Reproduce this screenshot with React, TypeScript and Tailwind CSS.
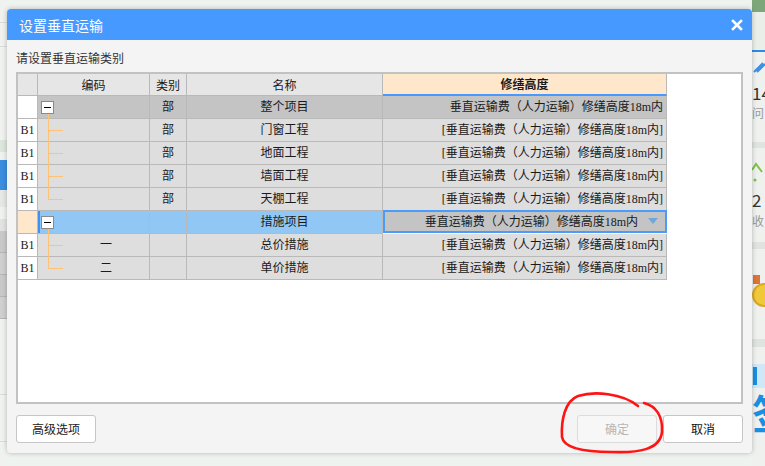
import React from "react";

type Tree = "minus" | "mid" | "last";
type Row = {
  rh: string;
  tree: Tree;
  code: string;
  kind: string;
  name: string;
  value: string;
  variant: "top" | "normal" | "selected";
};

const V = "垂直运输费（人力运输）修缮高度18m内";
const rows: Row[] = [
  { rh: "", tree: "minus", code: "", kind: "部", name: "整个项目", value: V, variant: "top" },
  { rh: "B1", tree: "mid", code: "", kind: "部", name: "门窗工程", value: `[${V}]`, variant: "normal" },
  { rh: "B1", tree: "mid", code: "", kind: "部", name: "地面工程", value: `[${V}]`, variant: "normal" },
  { rh: "B1", tree: "mid", code: "", kind: "部", name: "墙面工程", value: `[${V}]`, variant: "normal" },
  { rh: "B1", tree: "last", code: "", kind: "部", name: "天棚工程", value: `[${V}]`, variant: "normal" },
  { rh: "", tree: "minus", code: "", kind: "", name: "措施项目", value: V, variant: "selected" },
  { rh: "B1", tree: "mid", code: "一", kind: "", name: "总价措施", value: `[${V}]`, variant: "normal" },
  { rh: "B1", tree: "last", code: "二", kind: "", name: "单价措施", value: `[${V}]`, variant: "normal" },
];

function TreeMark({ tree }: { tree: Tree }) {
  if (tree === "minus") {
    return (
      <>
        <div className="absolute left-[3px] top-[5px] w-[13px] h-[13px] border border-[#8a8a8a] bg-white flex items-center justify-center">
          <div className="w-[7px] h-[1px] bg-black" />
        </div>
        <div className="absolute left-[10px] top-[18px] w-[1px] h-[5px] bg-[#ffc274]" />
      </>
    );
  }
  return (
    <>
      <div
        className={
          tree === "mid"
            ? "absolute left-[10px] top-[-1px] w-[1px] h-[24px] bg-[#ffc274]"
            : "absolute left-[10px] top-[-1px] w-[1px] h-[12px] bg-[#ffc274]"
        }
      />
      <div className="absolute left-[10px] top-[11px] w-[15px] h-[1px] bg-[#ffc274]" />
    </>
  );
}

function TableRow({ r }: { r: Row }) {
  const sel = r.variant === "selected";
  const cellBg = r.variant === "top" ? "bg-[#c4c4c4]" : sel ? "bg-[#90c7f5]" : "bg-[#dedede]";
  const cell = "h-[23px] border-r border-b border-[#b9b9b9] flex items-center";
  return (
    <>
      <div className={`${cell} justify-center ${sel ? "bg-[#ffe7cb]" : "bg-white"}`}>{r.rh}</div>
      <div
        className={`${cell} relative pl-[25px] justify-center ${cellBg} ${
          sel ? "shadow-[inset_2px_0_0_#3f92f2]" : ""
        }`}
      >
        <TreeMark tree={r.tree} />
        <span>{r.code}</span>
      </div>
      <div className={`${cell} justify-center ${cellBg}`}>{r.kind}</div>
      <div className={`${cell} justify-center ${cellBg}`}>{r.name}</div>
      {sel ? (
        <div className="h-[23px] border-2 border-[#4a9cf8] bg-[#c4c4c4] flex items-center justify-end pr-[7px] mt-[-1px]">
          <span className="whitespace-nowrap">{r.value}</span>
          <svg width="10" height="7" viewBox="0 0 10 7" className="ml-[10px]">
            <path d="M0 0 L10 0 L5 6 Z" fill="#6fa7da" />
          </svg>
        </div>
      ) : (
        <div className={`${cell} justify-end pr-[3px] ${cellBg}`}>
          <span className="whitespace-nowrap">{r.value}</span>
        </div>
      )}
    </>
  );
}

function Background() {
  return (
    <div className="absolute inset-0 flex justify-between">
      <div className="w-[7px] flex flex-col bg-[#eff2ef]">
        <div className="h-[23px] border-b border-[#dcdcdc]" />
        <div className="h-[24px] border-b border-[#dcdcdc]" />
        <div className="h-[93px]" />
        <div className="h-[12px] bg-[#dce6dc]" />
        <div className="h-[8px]" />
        <div className="h-[30px] bg-[#3b8de0]" />
        <div className="h-[17px] bg-[#e6e8e6]" />
        <div className="h-[12px]" />
        <div className="h-[12px] bg-[#e2e2e2]" />
        <div className="h-[22px] bg-[#c9c9c9] border-b border-[#b5b5b5]" />
        <div className="h-[22px] bg-[#cfcfcf] border-b border-[#b5b5b5]" />
        <div className="h-[22px] bg-[#c9c9c9] border-b border-[#b5b5b5]" />
        <div className="h-[22px] bg-[#cfcfcf] border-b border-[#b5b5b5]" />
        <div className="h-[76px] border-b border-[#dcdcdc]" />
        <div className="h-[47px] border-b border-[#dcdcdc]" />
      </div>
      <div className="w-[13px] flex flex-col bg-[#eef1ee] overflow-hidden font-['Noto_Sans_CJK_SC',sans-serif]">
        <div className="h-[12px] bg-[#7ea67b]" />
        <div className="h-[38px] bg-[#eaefea]" />
        <div className="h-[2px] bg-[#2f8ae6]" />
        <div className="h-[30px] flex items-center">
          <svg width="13" height="14" viewBox="0 0 13 14">
            <path d="M2 12 L11 3 M5 12 L13 4" stroke="#3b8fe6" strokeWidth="2" fill="none" />
          </svg>
        </div>
        <div className="h-[22px] text-[17px] leading-[22px] text-[#333] whitespace-nowrap">14</div>
        <div className="h-[18px] text-[12px] leading-[18px] text-[#999] whitespace-nowrap">问</div>
        <div className="h-[20px]" />
        <div className="h-[6px] bg-[#dfe4df]" />
        <div className="h-[40px] flex items-start pt-[12px]">
          <svg width="13" height="24" viewBox="0 0 13 24">
            <path d="M0 10 L4 4 L10 12" stroke="#7cc243" strokeWidth="2" fill="none" />
            <circle cx="3" cy="20" r="1.5" fill="#7cc243" />
          </svg>
        </div>
        <div className="h-[24px] text-[17px] leading-[24px] text-[#333] whitespace-nowrap">2</div>
        <div className="h-[18px] text-[12px] leading-[18px] text-[#999] whitespace-nowrap">收</div>
        <div className="h-[12px]" />
        <div className="h-[7px] bg-[#dfe4df]" />
        <div className="h-[26px]" />
        <div className="h-[34px] relative">
          <div className="absolute left-[1px] top-0 w-[7px] h-[9px] bg-[#e0733a]" />
          <div className="absolute left-0 top-[8px] w-[24px] h-[24px] rounded-full bg-[#f0c93a] border-2 border-[#d9a825]" />
        </div>
        <div className="h-[30px]" />
        <div className="h-[8px] bg-[#dfe4df]" />
        <div className="h-[17px]" />
        <div className="h-[24px] bg-[#cfe7f6] flex items-center">
          <div className="w-[4px] h-[18px] bg-[#1a8fe0] ml-[1px]" />
        </div>
        <div className="h-[48px] text-[40px] leading-[48px] font-bold text-[#1a8fe0] whitespace-nowrap">签</div>
      </div>
    </div>
  );
}

export default function App() {
  return (
    <div className="relative w-[765px] h-[466px] overflow-hidden bg-[#eff3ef]">
      <Background />

      <div className="absolute left-[7px] top-[9px] w-[745px] h-[444px] rounded-[4px] bg-[#f4f4f4] shadow-[0_0_5px_rgba(0,0,0,0.25)] overflow-hidden flex flex-col font-['Noto_Sans_CJK_SC',sans-serif]">
        <div className="h-[31px] shrink-0 bg-[#4599ff] flex items-center justify-between pl-[12px] pr-[9px]">
          <span className="text-[14px] text-white leading-none">设置垂直运输</span>
          <svg width="12" height="12" viewBox="0 0 12 12">
            <path d="M2 2 L10 10 M10 2 L2 10" stroke="white" strokeWidth="2.6" strokeLinecap="square" />
          </svg>
        </div>

        <div className="flex-1 flex flex-col px-[9px] pt-[9px] pb-[10px]">
          <div className="h-[18px] leading-[18px] text-[12px] text-[#333]">请设置垂直运输类别</div>

          <div className="mt-[5px] h-[332px] border-2 border-[#c2c2c2] bg-white font-['Liberation_Serif','Noto_Sans_CJK_SC',serif] text-[12px] text-[#1a1a1a]">
            <div className="grid grid-cols-[20px_112px_37px_196px_284px] w-[649px]">
              <div className="h-[22px] border-r border-b border-[#b9b9b9] bg-[#e6e6e6]" />
              <div className="h-[22px] border-r border-b border-[#b9b9b9] bg-[#e6e6e6] flex items-center justify-center font-['Noto_Sans_CJK_SC',sans-serif]">
                编码
              </div>
              <div className="h-[22px] border-r border-b border-[#b9b9b9] bg-[#e6e6e6] flex items-center justify-center font-['Noto_Sans_CJK_SC',sans-serif]">
                类别
              </div>
              <div className="h-[22px] border-r border-b border-[#b9b9b9] bg-[#e6e6e6] flex items-center justify-center font-['Noto_Sans_CJK_SC',sans-serif]">
                名称
              </div>
              <div className="h-[22px] border-r border-[#b9b9b9] border-b-2 border-b-[#4599ff] bg-[#ffe7cb] flex items-center justify-center font-bold font-['Noto_Sans_CJK_SC',sans-serif]">
                修缮高度
              </div>
              {rows.map((r, i) => (
                <TableRow key={i} r={r} />
              ))}
            </div>
          </div>

          <div className="mt-[11px] flex items-center gap-[6px] text-[12px]">
            <button className="w-[80px] h-[28px] rounded-[3px] border border-[#c6c6c6] bg-white text-[#222]">
              高级选项
            </button>
            <div className="flex-1" />
            <button className="w-[80px] h-[28px] rounded-[3px] border border-[#dcdcdc] bg-[#f7f7f7] text-[#b5b5b5]">
              确定
            </button>
            <button className="w-[80px] h-[28px] rounded-[3px] border border-[#c6c6c6] bg-white text-[#111]">
              取消
            </button>
          </div>
        </div>
      </div>

      <svg className="absolute left-0 top-0 pointer-events-none" width="765" height="466" viewBox="0 0 765 466">
        <path
          d="M638 406 C622 393 594 391 578 396 C565 401 561 420 562 437 C564 450 590 452 612 452 C638 453 660 450 662 432 C663 416 656 406 644 403"
          stroke="#ff1414"
          strokeWidth="2.6"
          fill="none"
          strokeLinecap="round"
        />
      </svg>
    </div>
  );
}
